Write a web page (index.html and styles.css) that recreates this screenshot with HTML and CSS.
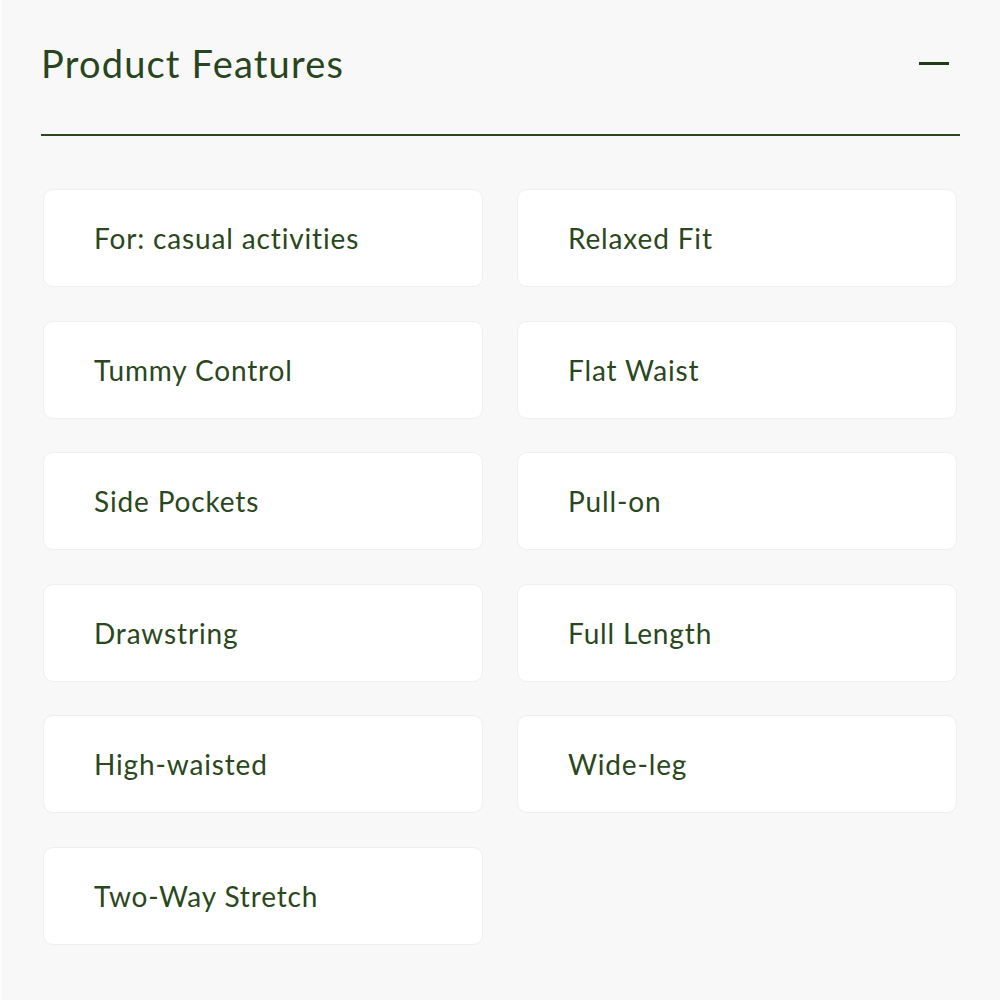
FILE: index.html
```html
<!DOCTYPE html>
<html>
<head>
<meta charset="utf-8">
<link rel="stylesheet" href="styles.css">
</head>
<body>
<section class="features">
  <header class="features-header">
    <h2 class="features-title">Product Features</h2>
    <span class="collapse-icon" aria-label="Collapse"></span>
  </header>
  <ul class="feature-grid">
    <li class="feature-card">For: casual activities</li>
    <li class="feature-card">Relaxed Fit</li>
    <li class="feature-card">Tummy Control</li>
    <li class="feature-card">Flat Waist</li>
    <li class="feature-card">Side Pockets</li>
    <li class="feature-card">Pull-on</li>
    <li class="feature-card">Drawstring</li>
    <li class="feature-card">Full Length</li>
    <li class="feature-card">High-waisted</li>
    <li class="feature-card">Wide-leg</li>
    <li class="feature-card">Two-Way Stretch</li>
  </ul>
</section>
</body>
</html>
```
FILE: styles.css
```css
html, body {
  margin: 0;
  padding: 0;
  background: #f8f8f8;
}
body {
  font-family: "Lato", "Noto Sans", sans-serif;
  font-variant-ligatures: none;
  font-feature-settings: "liga" 0;
  color: #2a4720;
  border-left: 2px solid #fcfcfc;
  min-height: 1000px;
  box-sizing: border-box;
}
.features {
  padding: 0 40px 0 39px;
}
.features-header {
  height: 136px;
  box-sizing: border-box;
  padding-bottom: 8px;
  display: flex;
  align-items: center;
  justify-content: space-between;
  border-bottom: 2px solid #2a4720;
}
.features-title {
  margin: 0;
  font-size: 38px;
  font-weight: 400;
  letter-spacing: 1.2px;
  line-height: 1;
  color: #284520;
}
.collapse-icon {
  width: 30px;
  height: 3px;
  background: #1f3a17;
  margin-right: 11px;
}
.feature-grid {
  list-style: none;
  margin: 53px 0 0;
  padding: 0 2px;
  display: grid;
  grid-template-columns: 440px 440px;
  column-gap: 34px;
  row-gap: 33.6px;
}
.feature-card {
  height: 98px;
  box-sizing: border-box;
  background: #ffffff;
  border: 1px solid #efefef;
  border-radius: 10px;
  display: flex;
  align-items: center;
  padding-left: 50px;
  font-size: 28px;
  letter-spacing: 0.85px;
  color: #2a4720;
}
```
